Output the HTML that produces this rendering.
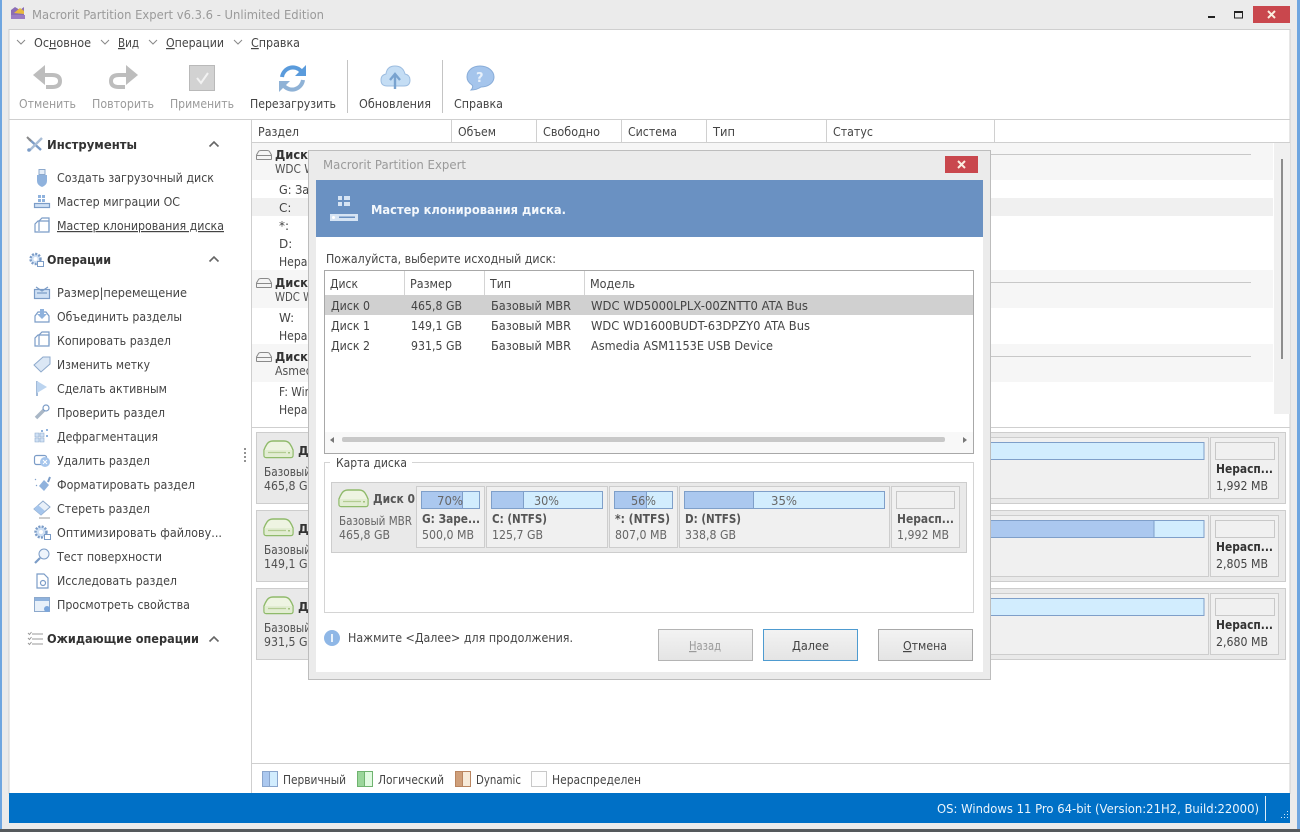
<!DOCTYPE html>
<html><head><meta charset="utf-8"><style>
html,body{margin:0;padding:0;background:#fff;overflow:hidden}
svg{display:block}
text{font-family:"DejaVu Sans",sans-serif;font-size:12px;fill:#444;white-space:pre}
.b{font-weight:bold;fill:#333}
.g{fill:#9a9a9a}
.h{fill:#505050}
.i{fill:none;stroke:#7b9cc7;stroke-width:1.2}
.f{fill:#cfe0f4;stroke:#7b9cc7;stroke-width:1.2}
</style></head><body>
<svg xmlns="http://www.w3.org/2000/svg" width="1300" height="832" viewBox="0 0 1300 832">
<defs>
<g id="dsk"><path d="M1 10 Q2 7 4 4 Q6 1 10 1 H21 Q25 1 27 4 Q29 7 30 10 V15 Q30 17.500 28 17.500 H3 Q1 17.500 1 15 Z" fill="#eef4e2" stroke="#8fba6a" stroke-width="1.400"/><path d="M1.500 10 H29.500 V15 Q29.500 17 28 17 H3 Q1.500 17 1.500 15 Z" fill="#e2edd2"/><path d="M5 12.500 H23" stroke="#b3cc92" stroke-width="1.200"/><path d="M25 12 h2 v1.500 h-2z" fill="#a3c27e"/></g>
<g id="hd"><path d="M.5 5 L2.500 1.500 Q3 .5 5 .5 H11 Q13 .5 13.500 1.500 L15.500 5 V9 Q15.500 9.500 15 9.500 H1 Q.5 9.500 .5 9 Z" fill="#f4f4f4" stroke="#8a8a8a"/><path d="M1 5.500 H15" stroke="#8a8a8a"/></g>
<path id="ch" d="M-4 -2 L0 2 L4 -2" fill="none" stroke="#888" stroke-width="1"/>
<path id="up" d="M-4.500 2.500 L0 -2 L4.500 2.500" fill="none" stroke="#666" stroke-width="1.600"/>
<linearGradient id="btn" x1="0" y1="0" x2="0" y2="1"><stop offset="0" stop-color="#f3f3f3"/><stop offset="1" stop-color="#e4e4e4"/></linearGradient>
</defs>

<!-- window frame -->
<rect width="1300" height="832" fill="#ebebeb"/>
<rect x="0" y="0" width="2" height="832" fill="#6fa6e0"/>
<rect x="1297" y="0" width="3" height="832" fill="#6fa6e0"/>
<rect y="829" width="1300" height="3" fill="#55595c"/>
<rect x="9" y="29.500" width="1281" height="764" fill="#fff" stroke="#cfcfcf"/>

<!-- title bar -->
<path d="M11 10 L15 7 L20 10 L24 7 V19 H11 Z" fill="#8b6db5"/><path d="M14 13 L20 8 L24 11 L24 14 Z" fill="#e8b93f"/><rect x="11" y="15" width="14" height="4" fill="#9a7cc4"/>
<text x="32" y="19" class="g" textLength="292" lengthAdjust="spacingAndGlyphs">Macrorit Partition Expert v6.3.6 - Unlimited Edition</text>
<rect x="1208" y="16" width="7" height="2" fill="#222"/>
<rect x="1234.500" y="11.500" width="8" height="6.500" fill="none" stroke="#222"/><rect x="1234" y="11" width="9" height="2" fill="#222"/>
<rect x="1253" y="6" width="37" height="17" fill="#c9474d"/>
<path d="M1268 11 L1275 18 M1275 11 L1268 18" stroke="#fbeee0" stroke-width="2"/>

<!-- menu -->
<use href="#ch" x="21" y="42"/><use href="#ch" x="105" y="42"/><use href="#ch" x="153" y="42"/><use href="#ch" x="238" y="42"/>
<text x="34" y="47" textLength="57" lengthAdjust="spacingAndGlyphs">Ос<tspan text-decoration="underline">н</tspan>овное</text>
<text x="118" y="47" textLength="21" lengthAdjust="spacingAndGlyphs"><tspan text-decoration="underline">В</tspan>ид</text>
<text x="166" y="47" textLength="58" lengthAdjust="spacingAndGlyphs"><tspan text-decoration="underline">О</tspan>перации</text>
<text x="251" y="47" textLength="49" lengthAdjust="spacingAndGlyphs"><tspan text-decoration="underline">С</tspan>правка</text>

<!-- toolbar icons -->
<g fill="none" stroke="#bdbdbd" stroke-width="4"><path d="M40 75 H52 Q60 75 60 81 Q60 87 52 87 H46"/><path d="M131 75 H119 Q111 75 111 81 Q111 87 119 87 H125"/></g>
<path d="M33 75 L45 65 V85 Z" fill="#bdbdbd"/><path d="M138 75 L126 65 V85 Z" fill="#bdbdbd"/>
<rect x="189.500" y="65.500" width="25" height="25" fill="#d2d2d2" stroke="#b9b9b9"/><path d="M197 78 L201 83 L208 73" fill="none" stroke="#f2f2f2" stroke-width="2"/>
<path d="M282 77 A11 11 0 0 1 301 71" fill="none" stroke="#5a9bdc" stroke-width="4"/><path d="M306 65 V76 H295 Z" fill="#5a9bdc"/>
<path d="M303 80 A11 11 0 0 1 284 86" fill="none" stroke="#8fb2d6" stroke-width="4"/><path d="M279 92 V81 H290 Z" fill="#8fb2d6"/>
<path d="M387 86 H404 Q410 86 410 80 Q410 75 405 74 Q403 66 395 66 Q387 66 386 74 Q381 75 381 80 Q381 86 387 86 Z" fill="#c4ddf4" stroke="#9dbde0"/>
<path d="M395 89 V76 M390 80 L395 74 L400 80" fill="none" stroke="#7aa3cf" stroke-width="2.400"/>
<path d="M480 66 C488 66 494 71 494 77 C494 83 488 87 481 87 C478 89 474 90 471 90 C473 88 473 86 472 85 C469 83 467 80 467 77 C467 71 472 66 480 66 Z" fill="#a5c5ec" stroke="#88acd8"/>
<text x="476" y="82" style="font-size:13px;font-weight:bold;fill:#e8f1fb">?</text>

<text x="19" y="108" class="g" textLength="57" lengthAdjust="spacingAndGlyphs">Отменить</text>
<text x="92" y="108" class="g" textLength="62" lengthAdjust="spacingAndGlyphs">Повторить</text>
<text x="170" y="108" class="g" textLength="64" lengthAdjust="spacingAndGlyphs">Применить</text>
<text x="250" y="108" textLength="86" lengthAdjust="spacingAndGlyphs">Перезагрузить</text>
<text x="359" y="108" textLength="72" lengthAdjust="spacingAndGlyphs">Обновления</text>
<text x="454" y="108" textLength="49" lengthAdjust="spacingAndGlyphs">Справка</text>
<rect x="347" y="60" width="1" height="53" fill="#c4c4c4"/><rect x="442" y="60" width="1" height="53" fill="#c4c4c4"/>
<rect x="9" y="119" width="1281" height="1" fill="#cfcfcf"/>
<rect x="251" y="119" width="1" height="674" fill="#cfcfcf"/>

<!-- sidebar -->
<path d="M29 139 L41 150" stroke="#7b9cc7" stroke-width="2.400"/><path d="M42 138 L30 150" stroke="#a9bdd6" stroke-width="2.400"/><path d="M27 137 L31 141" stroke="#8a8a8a" stroke-width="2"/><circle cx="29" cy="150" r="1.800" fill="#7b9cc7"/>
<text x="47" y="149" class="b" textLength="90" lengthAdjust="spacingAndGlyphs">Инструменты</text><use href="#up" x="214" y="144"/>
<rect x="39" y="169.500" width="6" height="5" fill="#e4edf8" stroke="#8da9cc"/><path d="M37 175 H47 V181 Q47 185 42 187 Q37 185 37 181 Z" fill="#8fb2dd"/>
<text x="57" y="182" textLength="157" lengthAdjust="spacingAndGlyphs">Создать загрузочный диск</text>
<rect x="34.500" y="203.500" width="15" height="4" class="f"/><path d="M38 195 h3 v3 h-3z M42 195 h3 v3 h-3z M38 199 h3 v3 h-3z M42 199 h3 v3 h-3z" fill="#8fb2dd"/>
<text x="57" y="206" textLength="123" lengthAdjust="spacingAndGlyphs">Мастер миграции ОС</text>
<path d="M35 232 V224 L38 221 H49 V232 Z" class="i"/><path d="M39 231 V221 L42 218 H49 V231" class="i"/>
<text x="57" y="230" textLength="167" lengthAdjust="spacingAndGlyphs" text-decoration="underline">Мастер клонирования диска</text>

<circle cx="35.500" cy="259" r="5" fill="#cfe0f4" stroke="#7b9cc7" stroke-width="2.400" stroke-dasharray="2 1.300"/><circle cx="35.500" cy="259" r="2" fill="#fff"/><rect x="37.500" y="261.500" width="6" height="5" fill="#fff" stroke="#7b9cc7"/>
<text x="47" y="264" class="b" textLength="64" lengthAdjust="spacingAndGlyphs">Операции</text><use href="#up" x="214" y="259"/>

<rect x="34.500" y="289.500" width="15" height="9" class="f"/><path d="M36 287 L42 291 L48 287 M37 293 H47" class="i"/>
<text x="57" y="297" textLength="130" lengthAdjust="spacingAndGlyphs">Размер|перемещение</text>
<path d="M35 322 V316 L38 312 H46 L49 316 V322 Z" class="i"/><path d="M40 309 H44 V314 H47 L42 319 L37 314 H40 Z" fill="#8fb2dd"/>
<text x="57" y="321" textLength="125" lengthAdjust="spacingAndGlyphs">Объединить разделы</text>
<path d="M35 346 V338 L38 335 H49 V346 Z" class="i"/><path d="M39 345 V335 L42 332 H49 V345" class="i"/>
<text x="57" y="345" textLength="114" lengthAdjust="spacingAndGlyphs">Копировать раздел</text>
<path d="M34 365 L43 357 H50 V364 L41 372 Z" fill="#dbe7f5" stroke="#8da9cc"/>
<text x="57" y="369" textLength="93" lengthAdjust="spacingAndGlyphs">Изменить метку</text>
<path d="M37 381 V396" stroke="#7b9cc7" stroke-width="1.400"/><path d="M37 381 L47 387 L37 393 Z" fill="#bcd4ef"/>
<text x="57" y="393" textLength="110" lengthAdjust="spacingAndGlyphs">Сделать активным</text>
<path d="M36 418 L44 410" stroke="#a9b7c6" stroke-width="3.500"/><circle cx="46" cy="408" r="3" class="i"/>
<text x="57" y="417" textLength="108" lengthAdjust="spacingAndGlyphs">Проверить раздел</text>
<path d="M35 433 h4 v4 h-4z M40 433 h4 v4 h-4z M35 438 h4 v4 h-4z M40 438 h4 v4 h-4z" fill="#cfe0f4" stroke="#8da9cc" stroke-width=".6"/><path d="M41 430 h2 v2 h-2z M46 429 h2 v2 h-2z M46 435 h2 v2 h-2z" fill="#8fb2dd"/>
<text x="57" y="441" textLength="101" lengthAdjust="spacingAndGlyphs">Дефрагментация</text>
<rect x="34.500" y="455.500" width="12" height="9" rx="2" class="i"/><circle cx="45" cy="462" r="5" fill="#a5c5ec"/><path d="M43 460 L47 464 M47 460 L43 464" stroke="#fff"/>
<text x="57" y="465" textLength="93" lengthAdjust="spacingAndGlyphs">Удалить раздел</text>
<path d="M39 486 L44 480 L49 485 L44 491 Z" fill="#8fb2dd"/><path d="M48 482 L50 477" stroke="#7b9cc7" stroke-width="2"/><path d="M35 479 l1 1 M36 485 l1 1" stroke="#7b9cc7"/>
<text x="57" y="489" textLength="138" lengthAdjust="spacingAndGlyphs">Форматировать раздел</text>
<path d="M34 509 L43 501 L50 507 L41 515 Z" fill="#e8f0f9" stroke="#8da9cc"/><path d="M34 509 L38 505 L45 511 L41 515 Z" fill="#a5c5ec"/><path d="M39 518 H50" stroke="#999"/>
<text x="57" y="513" textLength="93" lengthAdjust="spacingAndGlyphs">Стереть раздел</text>
<circle cx="41" cy="532" r="5.500" fill="#cfe0f4" stroke="#7b9cc7" stroke-width="2.400" stroke-dasharray="2 1.300"/><circle cx="41" cy="532" r="2" fill="#fff"/><rect x="44.500" y="534.500" width="6" height="5" fill="#fff" stroke="#7b9cc7"/>
<text x="57" y="537" textLength="165" lengthAdjust="spacingAndGlyphs">Оптимизировать файлову...</text>
<circle cx="44" cy="554" r="5" fill="#eef4fb" stroke="#7b9cc7"/><path d="M40 558 L35 563" stroke="#7b9cc7" stroke-width="2.200"/>
<text x="57" y="561" textLength="105" lengthAdjust="spacingAndGlyphs">Тест поверхности</text>
<path d="M37 574 H44 L48 578 V588 H37 Z" class="i"/><circle cx="43" cy="583" r="2.500" class="i"/>
<text x="57" y="585" textLength="120" lengthAdjust="spacingAndGlyphs">Исследовать раздел</text>
<rect x="34.500" y="597.500" width="15" height="14" fill="#e8f0f9" stroke="#8da9cc"/><rect x="35" y="598" width="14" height="3" fill="#8fb2dd"/><circle cx="47" cy="609" r="3" fill="#7ba6dc"/>
<text x="57" y="609" textLength="133" lengthAdjust="spacingAndGlyphs">Просмотреть свойства</text>
<path d="M32 634 H43 M32 639 H43 M32 644 H43" stroke="#999"/><path d="M28 633 l1.500 1.500 l2 -2.500 M28 638 l1.500 1.500 l2 -2.500 M28 643 l1.500 1.500 l2 -2.500" fill="none" stroke="#999"/>
<text x="47" y="643" class="b" textLength="152" lengthAdjust="spacingAndGlyphs">Ожидающие операции</text><use href="#up" x="214" y="639"/>
<path d="M245 448 v2 M245 452 v2 M245 456 v2 M245 460 v2" stroke="#777" stroke-width="1.600"/>

<!-- table header -->
<rect x="252" y="142" width="1038" height="1" fill="#cfcfcf"/>
<path d="M451.500 120 V142 M536.500 120 V142 M621.500 120 V142 M706.500 120 V142 M826.500 120 V142 M994.500 120 V142" stroke="#d0d0d0"/>
<text x="258" y="136" textLength="41" lengthAdjust="spacingAndGlyphs">Раздел</text>
<text x="458" y="136" textLength="38" lengthAdjust="spacingAndGlyphs">Объем</text>
<text x="543" y="136" textLength="57" lengthAdjust="spacingAndGlyphs">Свободно</text>
<text x="628" y="136" textLength="49" lengthAdjust="spacingAndGlyphs">Система</text>
<text x="713" y="136" textLength="22" lengthAdjust="spacingAndGlyphs">Тип</text>
<text x="833" y="136" textLength="40" lengthAdjust="spacingAndGlyphs">Статус</text>

<!-- tree rows -->
<rect x="252" y="143" width="1021" height="37" fill="#f6f6f6"/>
<rect x="252" y="198" width="1021" height="18" fill="#f0f0f0"/>
<rect x="252" y="270" width="1021" height="38" fill="#f6f6f6"/>
<rect x="252" y="344" width="1021" height="38" fill="#f6f6f6"/>
<path d="M310 154.500 H1251 M310 282.500 H1251 M310 356.500 H1251" stroke="#c8c8c8"/>
<rect x="1274" y="143" width="16" height="271" fill="#f0f0f0"/><rect x="1281" y="159" width="2" height="200" fill="#8c8c8c"/>
<use href="#hd" x="256" y="150"/><use href="#hd" x="256" y="278"/><use href="#hd" x="256" y="352"/>
<text x="275" y="159" class="b" textLength="45" lengthAdjust="spacingAndGlyphs">Диск 0</text>
<text x="275" y="173" class="h" textLength="100" lengthAdjust="spacingAndGlyphs">WDC WD5000LPLX</text>
<text x="279" y="194" textLength="120" lengthAdjust="spacingAndGlyphs">G: Зарезервировано</text>
<text x="279" y="212">C:</text><text x="279" y="230">*:</text><text x="279" y="248">D:</text>
<text x="279" y="266" textLength="90" lengthAdjust="spacingAndGlyphs">Нераспределен</text>
<text x="275" y="287" class="b" textLength="45" lengthAdjust="spacingAndGlyphs">Диск 1</text>
<text x="275" y="301" class="h" textLength="100" lengthAdjust="spacingAndGlyphs">WDC WD1600BUDT</text>
<text x="279" y="322">W:</text>
<text x="279" y="340" textLength="90" lengthAdjust="spacingAndGlyphs">Нераспределен</text>
<text x="275" y="361" class="b" textLength="45" lengthAdjust="spacingAndGlyphs">Диск 2</text>
<text x="275" y="375" class="h" textLength="110" lengthAdjust="spacingAndGlyphs">Asmedia ASM1153E</text>
<text x="279" y="396" textLength="60" lengthAdjust="spacingAndGlyphs">F: Windows</text>
<text x="279" y="414" textLength="90" lengthAdjust="spacingAndGlyphs">Нераспределен</text>
<rect x="252" y="427" width="1038" height="1" fill="#cfcfcf"/>

<!-- disk cards -->
<g fill="#e9e9e9" stroke="#cdcdcd">
<rect x="256.500" y="432.500" width="1029" height="71"/><rect x="256.500" y="510.500" width="1029" height="71"/><rect x="256.500" y="588.500" width="1029" height="71"/></g>
<g fill="#f0f0f0" stroke="#cdcdcd">
<rect x="990.500" y="437.500" width="218" height="61"/><rect x="1210.500" y="437.500" width="68" height="61"/>
<rect x="990.500" y="515.500" width="218" height="61"/><rect x="1210.500" y="515.500" width="68" height="61"/>
<rect x="990.500" y="593.500" width="218" height="61"/><rect x="1210.500" y="593.500" width="68" height="61"/></g>
<g stroke="#7f9fc9"><rect x="985" y="442.500" width="219" height="17" fill="#d2edfe"/><rect x="985" y="520.500" width="219" height="17" fill="#d2edfe"/><rect x="985" y="520.500" width="169" height="17" fill="#abc8ef"/><rect x="985" y="598.500" width="219" height="17" fill="#d2edfe"/></g>
<g fill="#f0f0f0" stroke="#c8c8c8"><rect x="1215.500" y="442.500" width="59" height="17"/><rect x="1215.500" y="520.500" width="59" height="17"/><rect x="1215.500" y="598.500" width="59" height="17"/></g>
<use href="#dsk" x="263" y="440"/><use href="#dsk" x="263" y="518"/><use href="#dsk" x="263" y="596"/>
<text x="298" y="455" class="b">Д</text><text x="298" y="533" class="b">Д</text><text x="298" y="611" class="b">Д</text>
<text x="264" y="476" class="h" textLength="74" lengthAdjust="spacingAndGlyphs">Базовый MBR</text><text x="264" y="490" class="h" textLength="51" lengthAdjust="spacingAndGlyphs">465,8 GB</text>
<text x="264" y="554" class="h" textLength="74" lengthAdjust="spacingAndGlyphs">Базовый MBR</text><text x="264" y="568" class="h" textLength="51" lengthAdjust="spacingAndGlyphs">149,1 GB</text>
<text x="264" y="632" class="h" textLength="74" lengthAdjust="spacingAndGlyphs">Базовый MBR</text><text x="264" y="646" class="h" textLength="51" lengthAdjust="spacingAndGlyphs">931,5 GB</text>
<text x="1216" y="473" class="b" textLength="57" lengthAdjust="spacingAndGlyphs">Нерасп...</text><text x="1216" y="490" textLength="52" lengthAdjust="spacingAndGlyphs">1,992 MB</text>
<text x="1216" y="551" class="b" textLength="57" lengthAdjust="spacingAndGlyphs">Нерасп...</text><text x="1216" y="568" textLength="52" lengthAdjust="spacingAndGlyphs">2,805 MB</text>
<text x="1216" y="629" class="b" textLength="57" lengthAdjust="spacingAndGlyphs">Нерасп...</text><text x="1216" y="646" textLength="52" lengthAdjust="spacingAndGlyphs">2,680 MB</text>

<!-- legend -->
<rect x="252" y="763" width="1038" height="1" fill="#cfcfcf"/>
<rect x="262.500" y="771.500" width="15" height="15" fill="#d2edfe" stroke="#8aa5cc"/><rect x="262.500" y="771.500" width="7" height="15" fill="#abc8ef" stroke="#8aa5cc"/>
<rect x="357.500" y="771.500" width="15" height="15" fill="#e0fae0" stroke="#6fb36f"/><rect x="357.500" y="771.500" width="7" height="15" fill="#9ad69a" stroke="#6fb36f"/>
<rect x="455.500" y="771.500" width="15" height="15" fill="#f7ead9" stroke="#b98560"/><rect x="455.500" y="771.500" width="7" height="15" fill="#cf9f7a" stroke="#b98560"/>
<rect x="531.500" y="771.500" width="15" height="15" fill="#fdfdfd" stroke="#c8c8c8"/>
<text x="283" y="784" textLength="63" lengthAdjust="spacingAndGlyphs">Первичный</text>
<text x="378" y="784" textLength="66" lengthAdjust="spacingAndGlyphs">Логический</text>
<text x="476" y="784" textLength="45" lengthAdjust="spacingAndGlyphs">Dynamic</text>
<text x="552" y="784" textLength="89" lengthAdjust="spacingAndGlyphs">Нераспределен</text>

<!-- status bar -->
<rect x="9" y="793" width="1281" height="30" fill="#0070c6"/>
<text x="937" y="813" style="fill:#eaf4fc" textLength="322" lengthAdjust="spacingAndGlyphs">OS: Windows 11 Pro 64-bit (Version:21H2, Build:22000)</text>
<rect x="1265" y="796" width="1" height="25" fill="#dcecf8"/>
<path d="M1287 811h1v1h-1z M1284 814h1v1h-1z M1287 814h1v1h-1z M1281 817h1v1h-1z M1284 817h1v1h-1z M1287 817h1v1h-1z" fill="#cfe4f5"/>

<!-- dialog -->
<rect x="308.500" y="150.500" width="682" height="529" fill="#ebebeb" stroke="#bdbdbd"/>
<rect x="316" y="180" width="667" height="492" fill="#fff"/>
<text x="323" y="169" class="g" textLength="143" lengthAdjust="spacingAndGlyphs">Macrorit Partition Expert</text>
<rect x="945" y="156" width="33" height="17" fill="#c9474d"/>
<path d="M958 161 L965 168 M965 161 L958 168" stroke="#fbeee0" stroke-width="2"/>
<rect x="316" y="180" width="667" height="57" fill="#6a91c2"/>
<path d="M338 196 h4 v4 h-4z M344 196 h6 v4 h-6z M338 202 h4 v4 h-4z M344 202 h6 v4 h-6z" fill="#d6e4f4"/>
<rect x="330" y="214" width="28" height="7" fill="#d6e4f4"/><rect x="339" y="216.500" width="16" height="1.500" fill="#6a91c2"/><circle cx="333.500" cy="217.500" r="1.500" fill="#fff"/>
<text x="371" y="214" class="b" style="fill:#f4f8fc" textLength="195" lengthAdjust="spacingAndGlyphs">Мастер клонирования диска.</text>
<text x="326" y="263" textLength="230" lengthAdjust="spacingAndGlyphs">Пожалуйста, выберите исходный диск:</text>

<!-- list -->
<rect x="324.500" y="270.500" width="649" height="183" fill="#fff" stroke="#a8a8a8"/>
<path d="M404.500 271 V295 M484.500 271 V295 M584.500 271 V295" stroke="#d4d4d4"/>
<rect x="325" y="295" width="648" height="20" fill="#d0d0d0"/>
<text x="330" y="288" textLength="28" lengthAdjust="spacingAndGlyphs">Диск</text>
<text x="410" y="288" textLength="42" lengthAdjust="spacingAndGlyphs">Размер</text>
<text x="490" y="288" textLength="21" lengthAdjust="spacingAndGlyphs">Тип</text>
<text x="590" y="288" textLength="45" lengthAdjust="spacingAndGlyphs">Модель</text>
<text x="331" y="310" textLength="39" lengthAdjust="spacingAndGlyphs">Диск 0</text><text x="411" y="310" textLength="51" lengthAdjust="spacingAndGlyphs">465,8 GB</text><text x="491" y="310" textLength="80" lengthAdjust="spacingAndGlyphs">Базовый MBR</text><text x="591" y="310" textLength="217" lengthAdjust="spacingAndGlyphs">WDC WD5000LPLX-00ZNTT0 ATA Bus</text>
<text x="331" y="330" textLength="39" lengthAdjust="spacingAndGlyphs">Диск 1</text><text x="411" y="330" textLength="51" lengthAdjust="spacingAndGlyphs">149,1 GB</text><text x="491" y="330" textLength="80" lengthAdjust="spacingAndGlyphs">Базовый MBR</text><text x="591" y="330" textLength="219" lengthAdjust="spacingAndGlyphs">WDC WD1600BUDT-63DPZY0 ATA Bus</text>
<text x="331" y="350" textLength="39" lengthAdjust="spacingAndGlyphs">Диск 2</text><text x="411" y="350" textLength="51" lengthAdjust="spacingAndGlyphs">931,5 GB</text><text x="491" y="350" textLength="80" lengthAdjust="spacingAndGlyphs">Базовый MBR</text><text x="591" y="350" textLength="182" lengthAdjust="spacingAndGlyphs">Asmedia ASM1153E USB Device</text>
<rect x="325" y="432" width="648" height="21" fill="#f8f8f8"/>
<rect x="342" y="437" width="603" height="5" rx="2" fill="#c8c8c8"/>
<path d="M334 437 L330 440 L334 443 Z M963 437 L967 440 L963 443 Z" fill="#777"/>

<!-- disk map group -->
<rect x="324.500" y="462.500" width="649" height="150" fill="#fff" stroke="#d4d4d4"/>
<rect x="330" y="458" width="82" height="10" fill="#fff"/>
<text x="336" y="467" textLength="71" lengthAdjust="spacingAndGlyphs">Карта диска</text>
<rect x="331.500" y="482.500" width="635" height="70" fill="#e9e9e9" stroke="#cdcdcd"/>
<g fill="#f0f0f0" stroke="#cdcdcd">
<rect x="416.500" y="486.500" width="68" height="61"/><rect x="486.500" y="486.500" width="121" height="61"/><rect x="609.500" y="486.500" width="68" height="61"/><rect x="679.500" y="486.500" width="210" height="61"/><rect x="891.500" y="486.500" width="68" height="61"/></g>
<g stroke="#7f9fc9">
<rect x="421.500" y="491.500" width="58" height="17" fill="#d2edfe"/><rect x="421.500" y="491.500" width="41" height="17" fill="#abc8ef"/>
<rect x="491.500" y="491.500" width="111" height="17" fill="#d2edfe"/><rect x="491.500" y="491.500" width="32" height="17" fill="#abc8ef"/>
<rect x="614.500" y="491.500" width="58" height="17" fill="#d2edfe"/><rect x="614.500" y="491.500" width="32" height="17" fill="#abc8ef"/>
<rect x="684.500" y="491.500" width="200" height="17" fill="#d2edfe"/><rect x="684.500" y="491.500" width="69" height="17" fill="#abc8ef"/>
</g>
<rect x="896.500" y="491.500" width="58" height="17" fill="#f0f0f0" stroke="#c8c8c8"/>
<text x="437" y="505" style="fill:#666" textLength="26" lengthAdjust="spacingAndGlyphs">70%</text>
<text x="534" y="505" style="fill:#666" textLength="25" lengthAdjust="spacingAndGlyphs">30%</text>
<text x="631" y="505" style="fill:#666" textLength="25" lengthAdjust="spacingAndGlyphs">56%</text>
<text x="771" y="505" style="fill:#666" textLength="26" lengthAdjust="spacingAndGlyphs">35%</text>
<use href="#dsk" x="338" y="489"/>
<text x="373" y="503" class="b" style="fill:#555" textLength="42" lengthAdjust="spacingAndGlyphs">Диск 0</text>
<text x="339" y="525" style="fill:#666" textLength="73" lengthAdjust="spacingAndGlyphs">Базовый MBR</text><text x="339" y="539" style="fill:#666" textLength="51" lengthAdjust="spacingAndGlyphs">465,8 GB</text>
<text x="422" y="539" style="fill:#666" textLength="52" lengthAdjust="spacingAndGlyphs">500,0 MB</text>
<text x="492" y="539" style="fill:#666" textLength="51" lengthAdjust="spacingAndGlyphs">125,7 GB</text>
<text x="615" y="539" style="fill:#666" textLength="52" lengthAdjust="spacingAndGlyphs">807,0 MB</text>
<text x="685" y="539" style="fill:#666" textLength="51" lengthAdjust="spacingAndGlyphs">338,8 GB</text>
<text x="897" y="539" style="fill:#666" textLength="52" lengthAdjust="spacingAndGlyphs">1,992 MB</text>
<text x="422" y="523" class="b" style="fill:#555" textLength="58" lengthAdjust="spacingAndGlyphs">G: Заре...</text>
<text x="492" y="523" class="b" style="fill:#555" textLength="55" lengthAdjust="spacingAndGlyphs">C: (NTFS)</text>
<text x="615" y="523" class="b" style="fill:#555" textLength="55" lengthAdjust="spacingAndGlyphs">*: (NTFS)</text>
<text x="685" y="523" class="b" style="fill:#555" textLength="56" lengthAdjust="spacingAndGlyphs">D: (NTFS)</text>
<text x="897" y="523" class="b" style="fill:#555" textLength="57" lengthAdjust="spacingAndGlyphs">Нерасп...</text>

<!-- footer -->
<circle cx="332" cy="638" r="8" fill="#8fb7e6"/><rect x="331" y="634" width="2" height="8" fill="#e9f2fb"/>
<text x="348" y="642" textLength="225" lengthAdjust="spacingAndGlyphs">Нажмите &lt;Далее&gt; для продолжения.</text>
<rect x="658.500" y="629.500" width="94" height="31" fill="url(#btn)" stroke="#b4b4b4"/>
<rect x="763.500" y="629.500" width="94" height="31" fill="url(#btn)" stroke="#4e9bd0"/>
<rect x="878.500" y="629.500" width="94" height="31" fill="url(#btn)" stroke="#a8a8a8"/>
<text x="689" y="650" class="g" textLength="32" lengthAdjust="spacingAndGlyphs"><tspan text-decoration="underline">Н</tspan>азад</text>
<text x="792" y="650" textLength="37" lengthAdjust="spacingAndGlyphs"><tspan text-decoration="underline">Д</tspan>алее</text>
<text x="903" y="650" textLength="44" lengthAdjust="spacingAndGlyphs"><tspan text-decoration="underline">О</tspan>тмена</text>
</svg>
</body></html>
